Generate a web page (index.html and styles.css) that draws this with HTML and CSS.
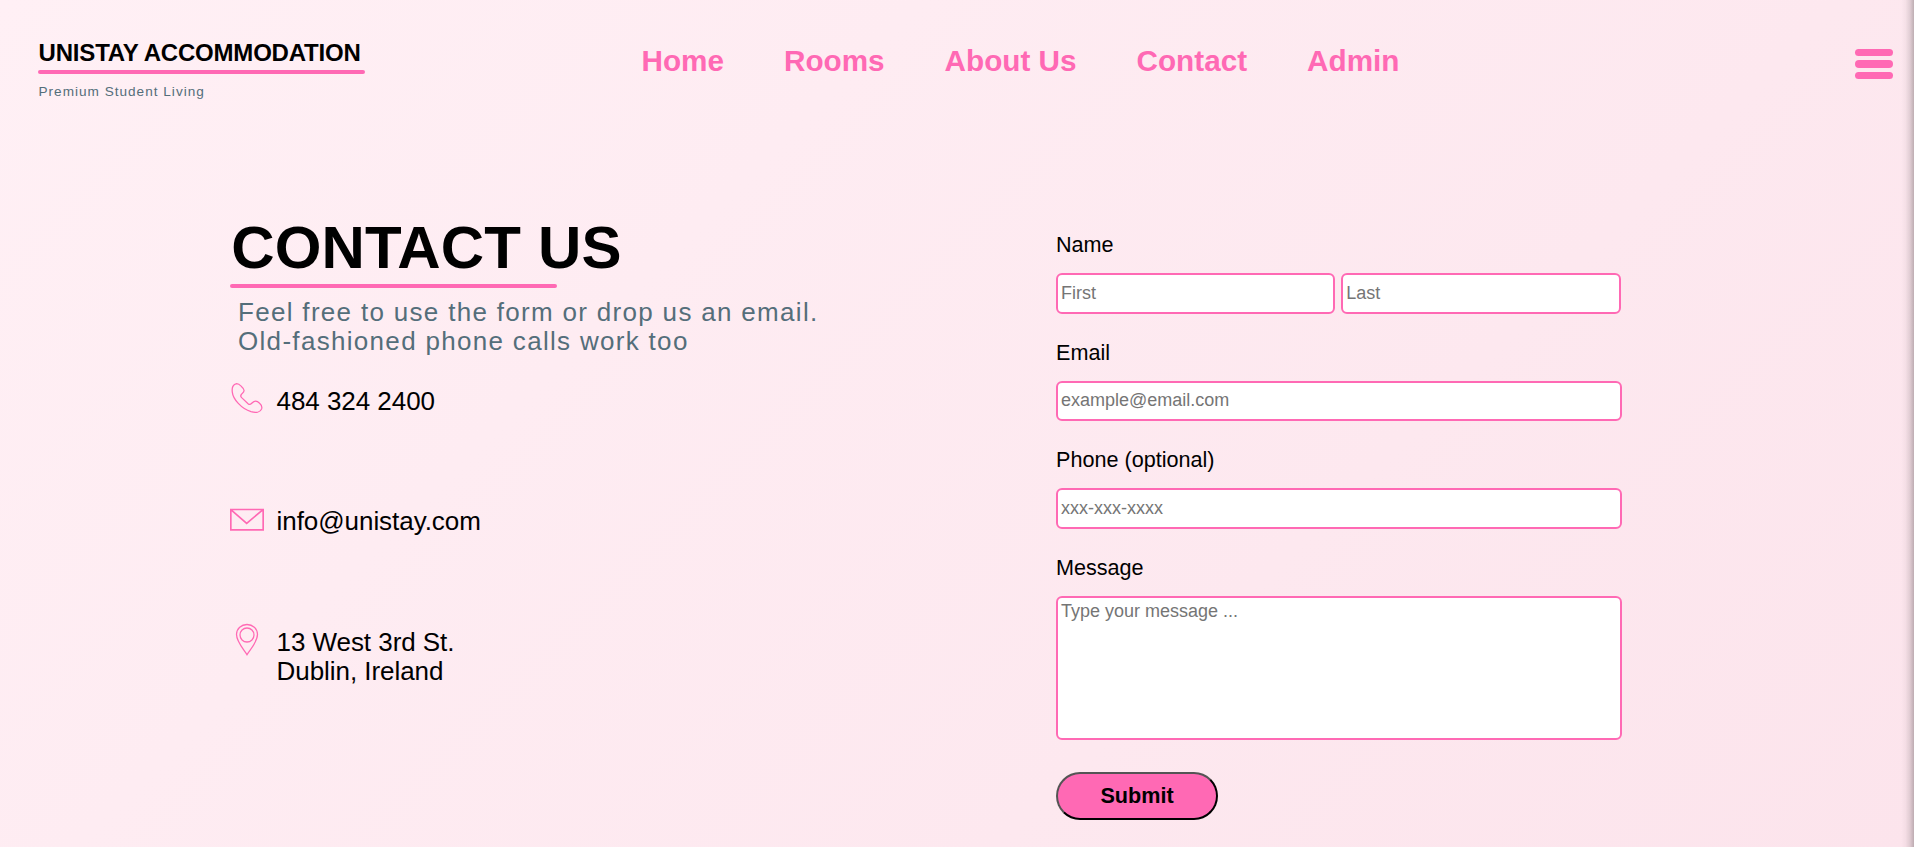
FILE: index.html
```html
<!DOCTYPE html>
<html lang="en">
<head>
<meta charset="utf-8">
<title>Unistay Accommodation - Contact</title>
<link rel="stylesheet" href="styles.css">
</head>
<body>
<header class="header">
  <div class="logo">
    <div class="logo-name">UNISTAY ACCOMMODATION</div>
    <div class="underline"></div>
    <div class="logo-tag">Premium Student Living</div>
  </div>
  <nav class="nav">
    <a>Home</a><a>Rooms</a><a>About Us</a><a>Contact</a><a>Admin</a>
  </nav>
  <div class="burger"><span></span><span></span><span></span></div>
</header>
<main class="main">
  <section class="info">
    <h1 class="title">CONTACT US</h1>
    <div class="underline"></div>
    <p class="lead">Feel free to use the form or drop us an email.<br>Old-fashioned phone calls work too</p>
    <ul class="contacts">
      <li class="contact">
        <svg class="icon" viewBox="30 37 102 102"><path d="M37 68C35 54 39 43 50 42C57 42 60 46 65 51C75 60 74 65 66 72C61 77 61 80 65 84L85 103C89 106 92 104 96 100C103 93 111 93 118 100C125 106 127 110 125 117C121 128 107 130 93 126C64 117 39 88 37 68Z" stroke-width="3.8"/></svg>
        <span>484 324 2400</span>
      </li>
      <li class="contact">
        <svg class="icon" viewBox="30 37 102 102"><path d="M32.5 56.5H129.5V117.5H32.5ZM32.5 57L80 98L129 57" stroke-width="5"/></svg>
        <span>info@unistay.com</span>
      </li>
      <li class="contact">
        <svg class="icon" viewBox="30 38 102 102"><path d="M81 133C74 120 49.5 96 49.5 72C50 54 64 42.5 81 42.5S112 54 112.5 72C112.5 96 88 120 81 133Z" stroke-width="3.8"/><circle cx="81" cy="74" r="21" stroke-width="3.8"/></svg>
        <span>13 West 3rd St.<br>Dublin, Ireland</span>
      </li>
    </ul>
  </section>
  <form class="form">
    <label class="label">Name</label>
    <div class="names"><input class="field" placeholder="First"><input class="field" placeholder="Last"></div>
    <label class="label">Email</label>
    <input class="field email" placeholder="example@email.com">
    <label class="label">Phone (optional)</label>
    <input class="field" placeholder="xxx-xxx-xxxx">
    <label class="label">Message</label>
    <textarea class="field message" placeholder="Type your message ..."></textarea>
    <button class="submit" type="button">Submit</button>
  </form>
</main>
<div class="edge-shadow"></div>
</body>
</html>
```
FILE: styles.css
```css
* { box-sizing: border-box; margin: 0; padding: 0; }
body {
  position: relative;
  height: 847px;
  overflow: hidden;
  font-family: "Liberation Sans", Arial, sans-serif;
  color: #000;
  background: linear-gradient(135deg, #fff0f5, #fce4ec);
}
.header { display: flex; align-items: flex-start; height: 213px; padding: 39px 21px 0 38px; }
.logo { width: 327px; }
.logo-name { padding-left: 0.6px; font-size: 24px; font-weight: bold; line-height: 28px; letter-spacing: -0.2px; white-space: nowrap; }
.underline { width: 327px; height: 4px; margin-top: 3px; border-radius: 2px; background: #ff69b4; }
.logo-tag { margin-top: 10px; padding-left: 0.5px; font-size: 13.6px; line-height: 16px; letter-spacing: 1px; color: #546e7a; }
.nav { display: flex; gap: 60px; margin: 5px 0 0 276.5px; }
.nav a { color: #ff69b4; font-size: 29.7px; font-weight: bold; line-height: 34px; white-space: nowrap; }
.burger { display: grid; gap: 4.2px; width: 38px; margin: 10px 0 0 auto; }
.burger span { height: 7.3px; border-radius: 4px; background: #ff69b4; }
.main { display: flex; padding-left: 230px; }
.info { width: 826px; }
.title { padding: 1px 0 0 1.2px; font-size: 60px; line-height: 67px; letter-spacing: 0.15px; white-space: nowrap; }
.lead { margin: 10px 0 0 8px; font-size: 26px; line-height: 29px; letter-spacing: 1.31px; color: #546e7a; }
.contacts { list-style: none; margin-top: 26px; }
.contact { display: flex; gap: 12px; height: 120.5px; font-size: 26px; line-height: 29px; letter-spacing: -0.05px; }
.contact span { padding: 4.5px 0 0 0.5px; }
.icon { width: 34px; height: 34px; fill: none; stroke: #ff69b4; }
.form { display: flex; flex-direction: column; align-items: flex-start; width: 566px; padding-top: 19.2px; }
.label { margin-bottom: 16px; font-size: 21.6px; line-height: 25px; }
.field { display: block; width: 100%; height: 40.6px; margin-bottom: 26px; padding: 0 3px; border: 2px solid #ff69b4; border-radius: 6px; background: #fff; font-family: inherit; font-size: 18px; }
.field::placeholder { color: #757575; }
.names { display: flex; gap: 6px; width: 564.5px; }
.names .field { flex: 1 1 0; min-width: 0; }
.email { padding-bottom: 1px; }
.message { height: 144px; margin-bottom: 32px; padding: 3px; resize: none; }
.submit { width: 162px; height: 48px; border: 2px outset #000; border-radius: 24px; background: #ff69b4; font-family: inherit; font-size: 21.6px; font-weight: bold; }
.edge-shadow {
  position: absolute; top: 0; right: 0; width: 13px; height: 100%;
  background: linear-gradient(to right, rgba(0, 0, 0, 0), rgba(0, 0, 0, 0.03) 35%, rgba(0, 0, 0, 0.11) 68%, rgba(0, 0, 0, 0.25));
}
```
